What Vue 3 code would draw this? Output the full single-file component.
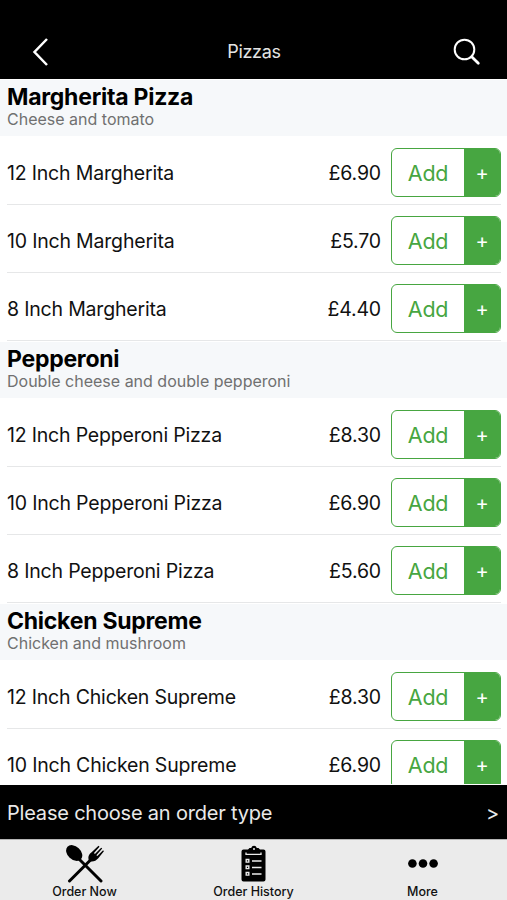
<script setup>
const sections = [
  {
    name: 'Margherita Pizza', note: 'Cheese and tomato', key: 'marg',
    items: [['12 Inch Margherita', '£6.90'], ['10 Inch Margherita', '£5.70'], ['8 Inch Margherita', '£4.40']],
  },
  {
    name: 'Pepperoni', note: 'Double cheese and double pepperoni', key: 'pep',
    items: [['12 Inch Pepperoni Pizza', '£8.30'], ['10 Inch Pepperoni Pizza', '£6.90'], ['8 Inch Pepperoni Pizza', '£5.60']],
  },
  {
    name: 'Chicken Supreme', note: 'Chicken and mushroom', key: 'chick',
    items: [['12 Inch Chicken Supreme', '£8.30'], ['10 Inch Chicken Supreme', '£6.90']],
  },
]
</script>

<template>
  <div class="app">
    <header class="nav">
      <svg class="back" width="20" height="32" viewBox="0 0 20 32"><path d="M16 3 3.500 16 16 29" /></svg>
      <h1>Pizzas</h1>
      <svg class="search" width="30" height="30" viewBox="0 0 30 30"><circle cx="12.5" cy="12.5" r="9.8" /><path class="handle" d="m19.7 19.7 6.6 6.6" /></svg>
    </header>

    <main class="list">
      <section v-for="s in sections" :key="s.key">
        <div class="head">
          <h2>{{ s.name }}</h2>
          <p>{{ s.note }}</p>
        </div>
        <div v-for="[label, price] in s.items" :key="label" class="row">
          <span class="label">{{ label }}</span>
          <span class="price">{{ price }}</span>
          <button class="add"><span class="word">Add</span><span class="plus">+</span></button>
        </div>
      </section>
    </main>

    <div class="order"><span>Please choose an order type</span><span class="gt">&gt;</span></div>

    <nav class="tabs">
      <div class="tab">
        <svg width="40" height="38" viewBox="0 0 40 38">
          <path d="M12.5 12.5 36 36" class="stick" />
          <path d="M28 12.5 4.5 36" class="stick" />
          <ellipse cx="9.2" cy="8" rx="9.2" ry="6.600" transform="rotate(43 9.2 8)" />
          <path d="M24 15.5c-1.5-4 0-6.300 2.600-8.300L33.500.8l1 .9-5.500 6.300.9.9L36.200 2.700l1 .9-5.800 6.600.9.8 5.800-5.700.8 1-5.600 7c-2.200 2.500-5.300 4-8.500 3z" />
        </svg>
        <span>Order Now</span>
      </div>
      <div class="tab">
        <svg width="40" height="38" viewBox="0 0 40 38">
          <path d="M9.500 4.500h4.500l1.500-1.500h1.700a2.900 2.900 0 0 1 5.600 0h1.700L26 4.500h3.500a2 2 0 0 1 2 2v28a2 2 0 0 1-2 2h-20a2 2 0 0 1-2-2v-28a2 2 0 0 1 2-2z" />
          <path class="cut" d="M12 7.500v1.800h15V7.500" />
          <circle cx="20" cy="4" r="1" class="hole" />
          <g class="boxes"><path d="M12.200 14.500h2.600v2.600h-2.600zM12.200 21h2.600v2.600h-2.600zM12.200 27.500h2.600v2.600h-2.600z" /><path d="M18 16h9.500M18 22.500h9.500M18 29h9.500" /></g>
        </svg>
        <span>Order History</span>
      </div>
      <div class="tab">
        <svg width="40" height="38" viewBox="0 0 40 38"><circle cx="9.400" cy="18.500" r="4.300" /><circle cx="20" cy="18.500" r="4.300" /><circle cx="30.600" cy="18.500" r="4.300" /></svg>
        <span>More</span>
      </div>
    </nav>
  </div>
</template>

<style>
body { margin: 0; background: #fff; }
</style>

<style scoped>
.app { width: 507px; height: 900px; display: flex; flex-direction: column; overflow: hidden; background: #fff; color: #111; font-family: Inter, "Liberation Sans", sans-serif; }
h1, h2, p { margin: 0; font-weight: 400; }
.nav { flex: none; box-sizing: border-box; height: 79px; padding: 25px 25px 0 31px; background: #000; display: grid; grid-template-columns: 32px 1fr 32px; align-items: center; }
.nav h1 { color: #e4e4e4; font-size: 18px; letter-spacing: -0.300px; padding-right: 5px; text-align: center; line-height: 24px; }
.nav svg { fill: none; stroke: #fff; stroke-width: 2.500; }
.nav .search { justify-self: end; stroke-width: 2; }
.nav .handle { stroke-width: 2.800; stroke-linecap: round; }
.list { flex: none; height: 705px; padding-top: 1px; box-sizing: border-box; overflow: hidden; }
section { margin-bottom: 1px; }
.head { box-sizing: border-box; height: 56px; margin-bottom: 1px; padding: 4px 7px 0; background: #f6f8fa; }
.head h2 { font-size: 23px; font-weight: 700; line-height: 26px; letter-spacing: -0.250px; color: #000; white-space: nowrap; }
.head p { font-size: 16px; line-height: 19px; color: #707070; white-space: nowrap; }
.row { box-sizing: border-box; height: 68px; margin: 0 6px 0 7px; border-bottom: 1.500px solid #e6e7e8; display: flex; align-items: center; font-size: 19.500px; }
.label { flex: 1; white-space: nowrap; padding-top: 4px; letter-spacing: -0.190px; }
.price { width: 70px; margin-right: 10px; text-align: right; padding-top: 4px; letter-spacing: -0.150px; }
.add { box-sizing: border-box; width: 110px; height: 49px; margin: 4px 0 0; padding: 0; border: 1.500px solid #47a641; border-radius: 6px; overflow: hidden; display: flex; background: #fff; font: inherit; color: #47a641; }
.word { flex: 1; font-size: 21.500px; font-weight: 400; letter-spacing: -0.300px; line-height: 48px; }
.plus { width: 36px; background: #47a641; color: #fff; font-size: 20px; line-height: 49px; text-align: center; }
.order { flex: none; box-sizing: border-box; height: 54px; margin-top: 1px; padding: 1px 8px 0 7px; background: #000; color: #e9e9e9; display: flex; align-items: center; justify-content: space-between; font-size: 20px; letter-spacing: -0.200px; }
.gt { font-size: 20px; }
.tabs { flex: 1; background: #ebebeb; border-top: 1px solid #b5b5b5; display: grid; grid-template-columns: repeat(3, 1fr); }
.tab { display: flex; flex-direction: column; align-items: center; padding-top: 5px; }
.tab span { font-size: 12.500px; font-weight: 500; line-height: 17px; }
.stick { stroke: #000; stroke-width: 3; stroke-linecap: round; }
.cut { fill: none; stroke: #ebebeb; stroke-width: 1.300; }
.hole { fill: #ebebeb; }
.boxes { fill: none; stroke: #ebebeb; stroke-width: 1.400; }
</style>
